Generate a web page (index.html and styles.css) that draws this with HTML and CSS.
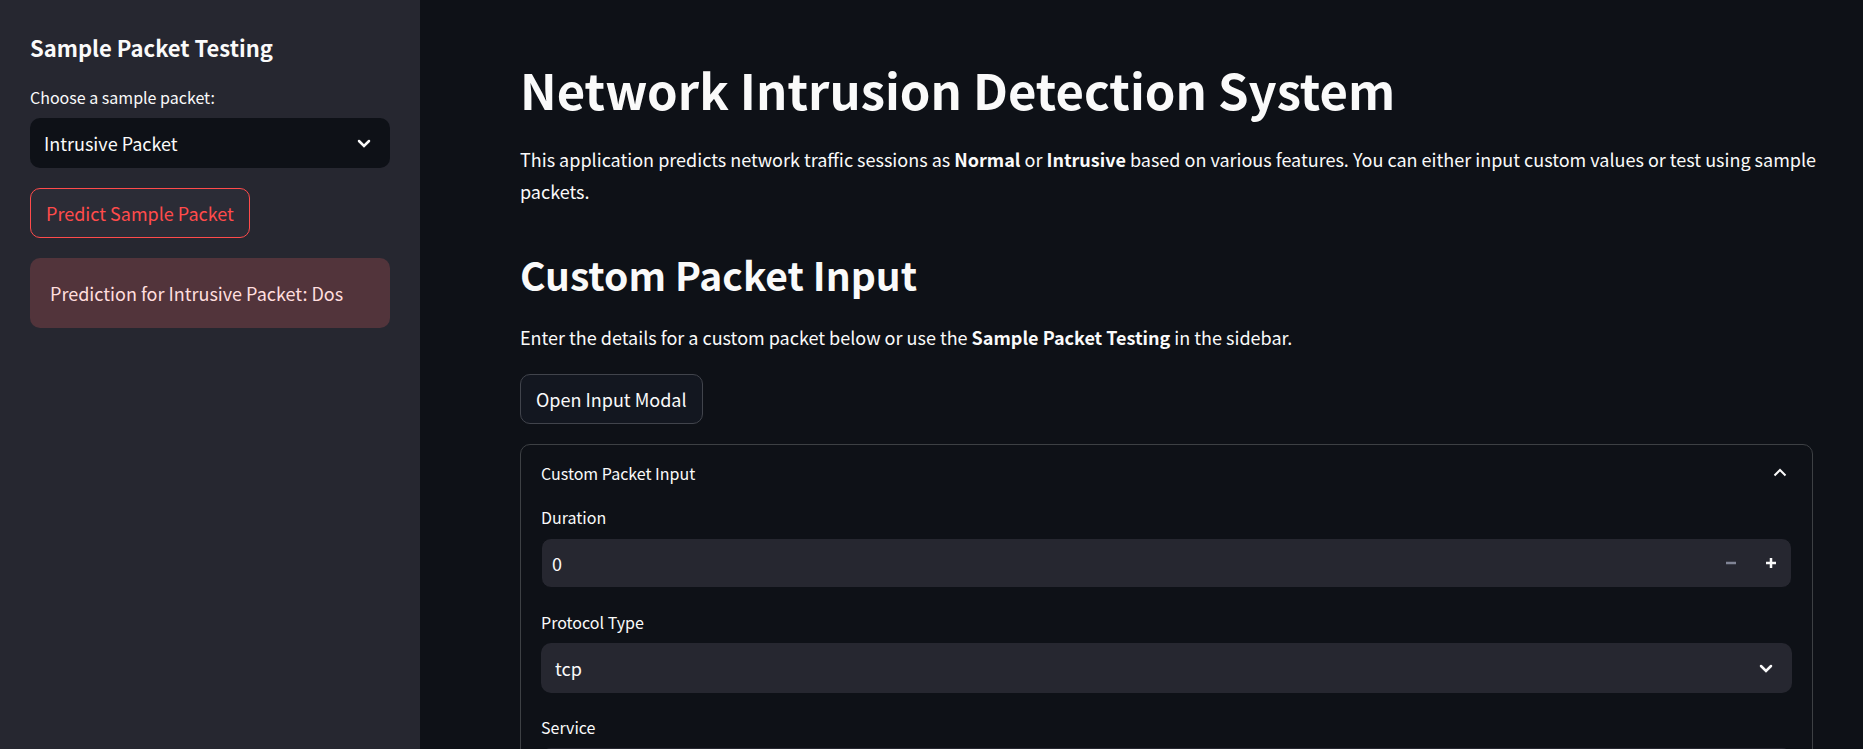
FILE: index.html
```html
<!DOCTYPE html>
<html lang="en">
<head>
<meta charset="utf-8">
<meta name="viewport" content="width=device-width, initial-scale=1">
<title>Network Intrusion Detection System</title>
<link rel="stylesheet" href="styles.css">
</head>
<body>
<div class="app">
  <aside class="sidebar">
    <h2 class="sidebar-title">Sample Packet Testing</h2>
    <div class="field">
      <label class="label" for="sample">Choose a sample packet:</label>
      <div class="select-box select-dark">
        <select class="select" id="sample"><option>Intrusive Packet</option><option>Normal Packet</option></select>
        <svg class="chevron" viewBox="0 0 24 24" aria-hidden="true"><path d="M7 10l5 5 5-5"/></svg>
      </div>
    </div>
    <button class="button button-active" type="button">Predict Sample Packet</button>
    <div class="alert" role="alert">Prediction for Intrusive Packet: Dos</div>
  </aside>
  <main class="main">
    <h1 class="title">Network Intrusion Detection System</h1>
    <p class="text">This application predicts network traffic sessions as <strong>Normal</strong> or <strong>Intrusive</strong> based on various features. You can either input custom values or test using sample packets.</p>
    <h2 class="heading">Custom Packet Input</h2>
    <p class="text">Enter the details for a custom packet below or use the <strong>Sample Packet Testing</strong> in the sidebar.</p>
    <button class="button" type="button">Open Input Modal</button>
    <details class="expander" open>
      <summary class="summary">
        <span>Custom Packet Input</span>
        <svg class="chevron chevron-up" viewBox="0 0 24 24" aria-hidden="true"><path d="M6.500 14.500 12 9l5.500 5.500"/></svg>
      </summary>
      <div class="form">
        <div class="field">
          <label class="label" for="duration">Duration</label>
          <div class="number-box">
            <input class="number" id="duration" type="number" min="0" value="0">
            <button class="step" type="button" aria-label="Decrease" disabled><svg class="step-icon" viewBox="0 0 10 10" aria-hidden="true"><path d="M0 5h10"/></svg></button>
            <button class="step" type="button" aria-label="Increase"><svg class="step-icon" viewBox="0 0 10 10" aria-hidden="true"><path d="M0 5h10M5 0v10"/></svg></button>
          </div>
        </div>
        <div class="field">
          <label class="label" for="protocol">Protocol Type</label>
          <div class="select-box">
            <select class="select" id="protocol"><option>tcp</option><option>udp</option><option>icmp</option></select>
            <svg class="chevron" viewBox="0 0 24 24" aria-hidden="true"><path d="M7 10l5 5 5-5"/></svg>
          </div>
        </div>
        <div class="field">
          <label class="label" for="service">Service</label>
          <div class="select-box">
            <select class="select" id="service"><option>http</option><option>ftp</option></select>
            <svg class="chevron" viewBox="0 0 24 24" aria-hidden="true"><path d="M7 10l5 5 5-5"/></svg>
          </div>
        </div>
      </div>
    </details>
  </main>
</div>
</body>
</html>
```
FILE: styles.css
```css
* {
  box-sizing: border-box;
}

body {
  margin: 0;
  background: #0e1117;
  color: #fafafa;
  font-family: "Noto Sans CJK SC", "Noto Sans", sans-serif;
  font-size: 18px;
  line-height: 32px;
}

button,
input,
select {
  font: inherit;
  color: inherit;
}

h1,
h2,
p {
  margin: 0;
}

.app {
  display: flex;
  height: 100vh;
}

.sidebar {
  flex: 0 0 420px;
  display: flex;
  flex-direction: column;
  align-items: flex-start;
  gap: 20px;
  padding: 31px 30px;
  background: #262730;
}

.sidebar > .field,
.alert {
  width: 100%;
}

.sidebar-title {
  margin-bottom: 2px;
  font-size: 22px;
  font-weight: 600;
}

.main {
  flex: 1;
  min-width: 0;
  padding: 56px 50px 100px 100px;
  overflow-y: auto;
  scrollbar-width: none;
}

.title {
  margin-bottom: 21px;
  font-size: 49px;
  font-weight: 700;
  line-height: 66px;
}

.text {
  margin: 0 -10px 21px 0;
}

.heading {
  margin: 40px 0 20px;
  font-size: 39px;
  font-weight: 600;
  line-height: 54px;
}

.text + .heading {
  margin-top: 40px;
}

.label {
  font-size: 16px;
  line-height: 24px;
}

.field {
  display: flex;
  flex-direction: column;
  gap: 9px;
}

.select-box {
  display: grid;
  align-items: center;
  border-radius: 10px;
  background: #262730;
}

.select-dark {
  background: #0e1117;
}

.select,
.select-box .chevron {
  grid-area: 1 / 1;
}

.select {
  width: 100%;
  height: 50px;
  padding: 0 48px 0 14px;
  border: 0;
  border-radius: 10px;
  background: transparent;
  appearance: none;
}

.select option {
  background: #262730;
}

.chevron {
  width: 24px;
  height: 24px;
  fill: none;
  stroke: #fafafa;
  stroke-width: 2.500;
}

.chevron-up {
  stroke-width: 2;
}

.select-box .chevron {
  justify-self: end;
  margin-right: 14px;
  stroke-linecap: round;
  pointer-events: none;
}

.button {
  height: 50px;
  padding: 0 15px;
  border: 1px solid #41444c;
  border-radius: 10px;
  background: #131720;
}

.button-active {
  border-color: #ff4b4b;
  background: #2b2c36;
  color: #ff4b4b;
}

.alert {
  padding: 19px 20px;
  border-radius: 10px;
  background: #52343b;
  color: #ffdede;
}

.expander {
  margin-top: 20px;
  border: 1px solid #3d4044;
  border-radius: 10px;
}

.summary {
  display: flex;
  align-items: center;
  justify-content: space-between;
  padding: 16px 20px;
  font-size: 16px;
  line-height: 24px;
  list-style: none;
  cursor: pointer;
}

.form {
  display: flex;
  flex-direction: column;
  gap: 22px;
  padding: 4px 20px 20px;
}

.number-box {
  display: flex;
  height: 50px;
  border: 1px solid #0e1117;
  border-radius: 10px;
  background: #262730;
  overflow: hidden;
}

.number {
  flex: 1;
  min-width: 0;
  padding: 0 10px;
  border: 0;
  background: transparent;
  appearance: textfield;
}

.number::-webkit-inner-spin-button {
  appearance: none;
  margin: 0;
}

.step {
  display: grid;
  place-items: center;
  width: 40px;
  padding: 0;
  border: 0;
  background: transparent;
}

.step:disabled {
  color: #808495;
}

.step-icon {
  width: 10px;
  height: 10px;
  stroke: currentColor;
  stroke-width: 2.500;
}
```
